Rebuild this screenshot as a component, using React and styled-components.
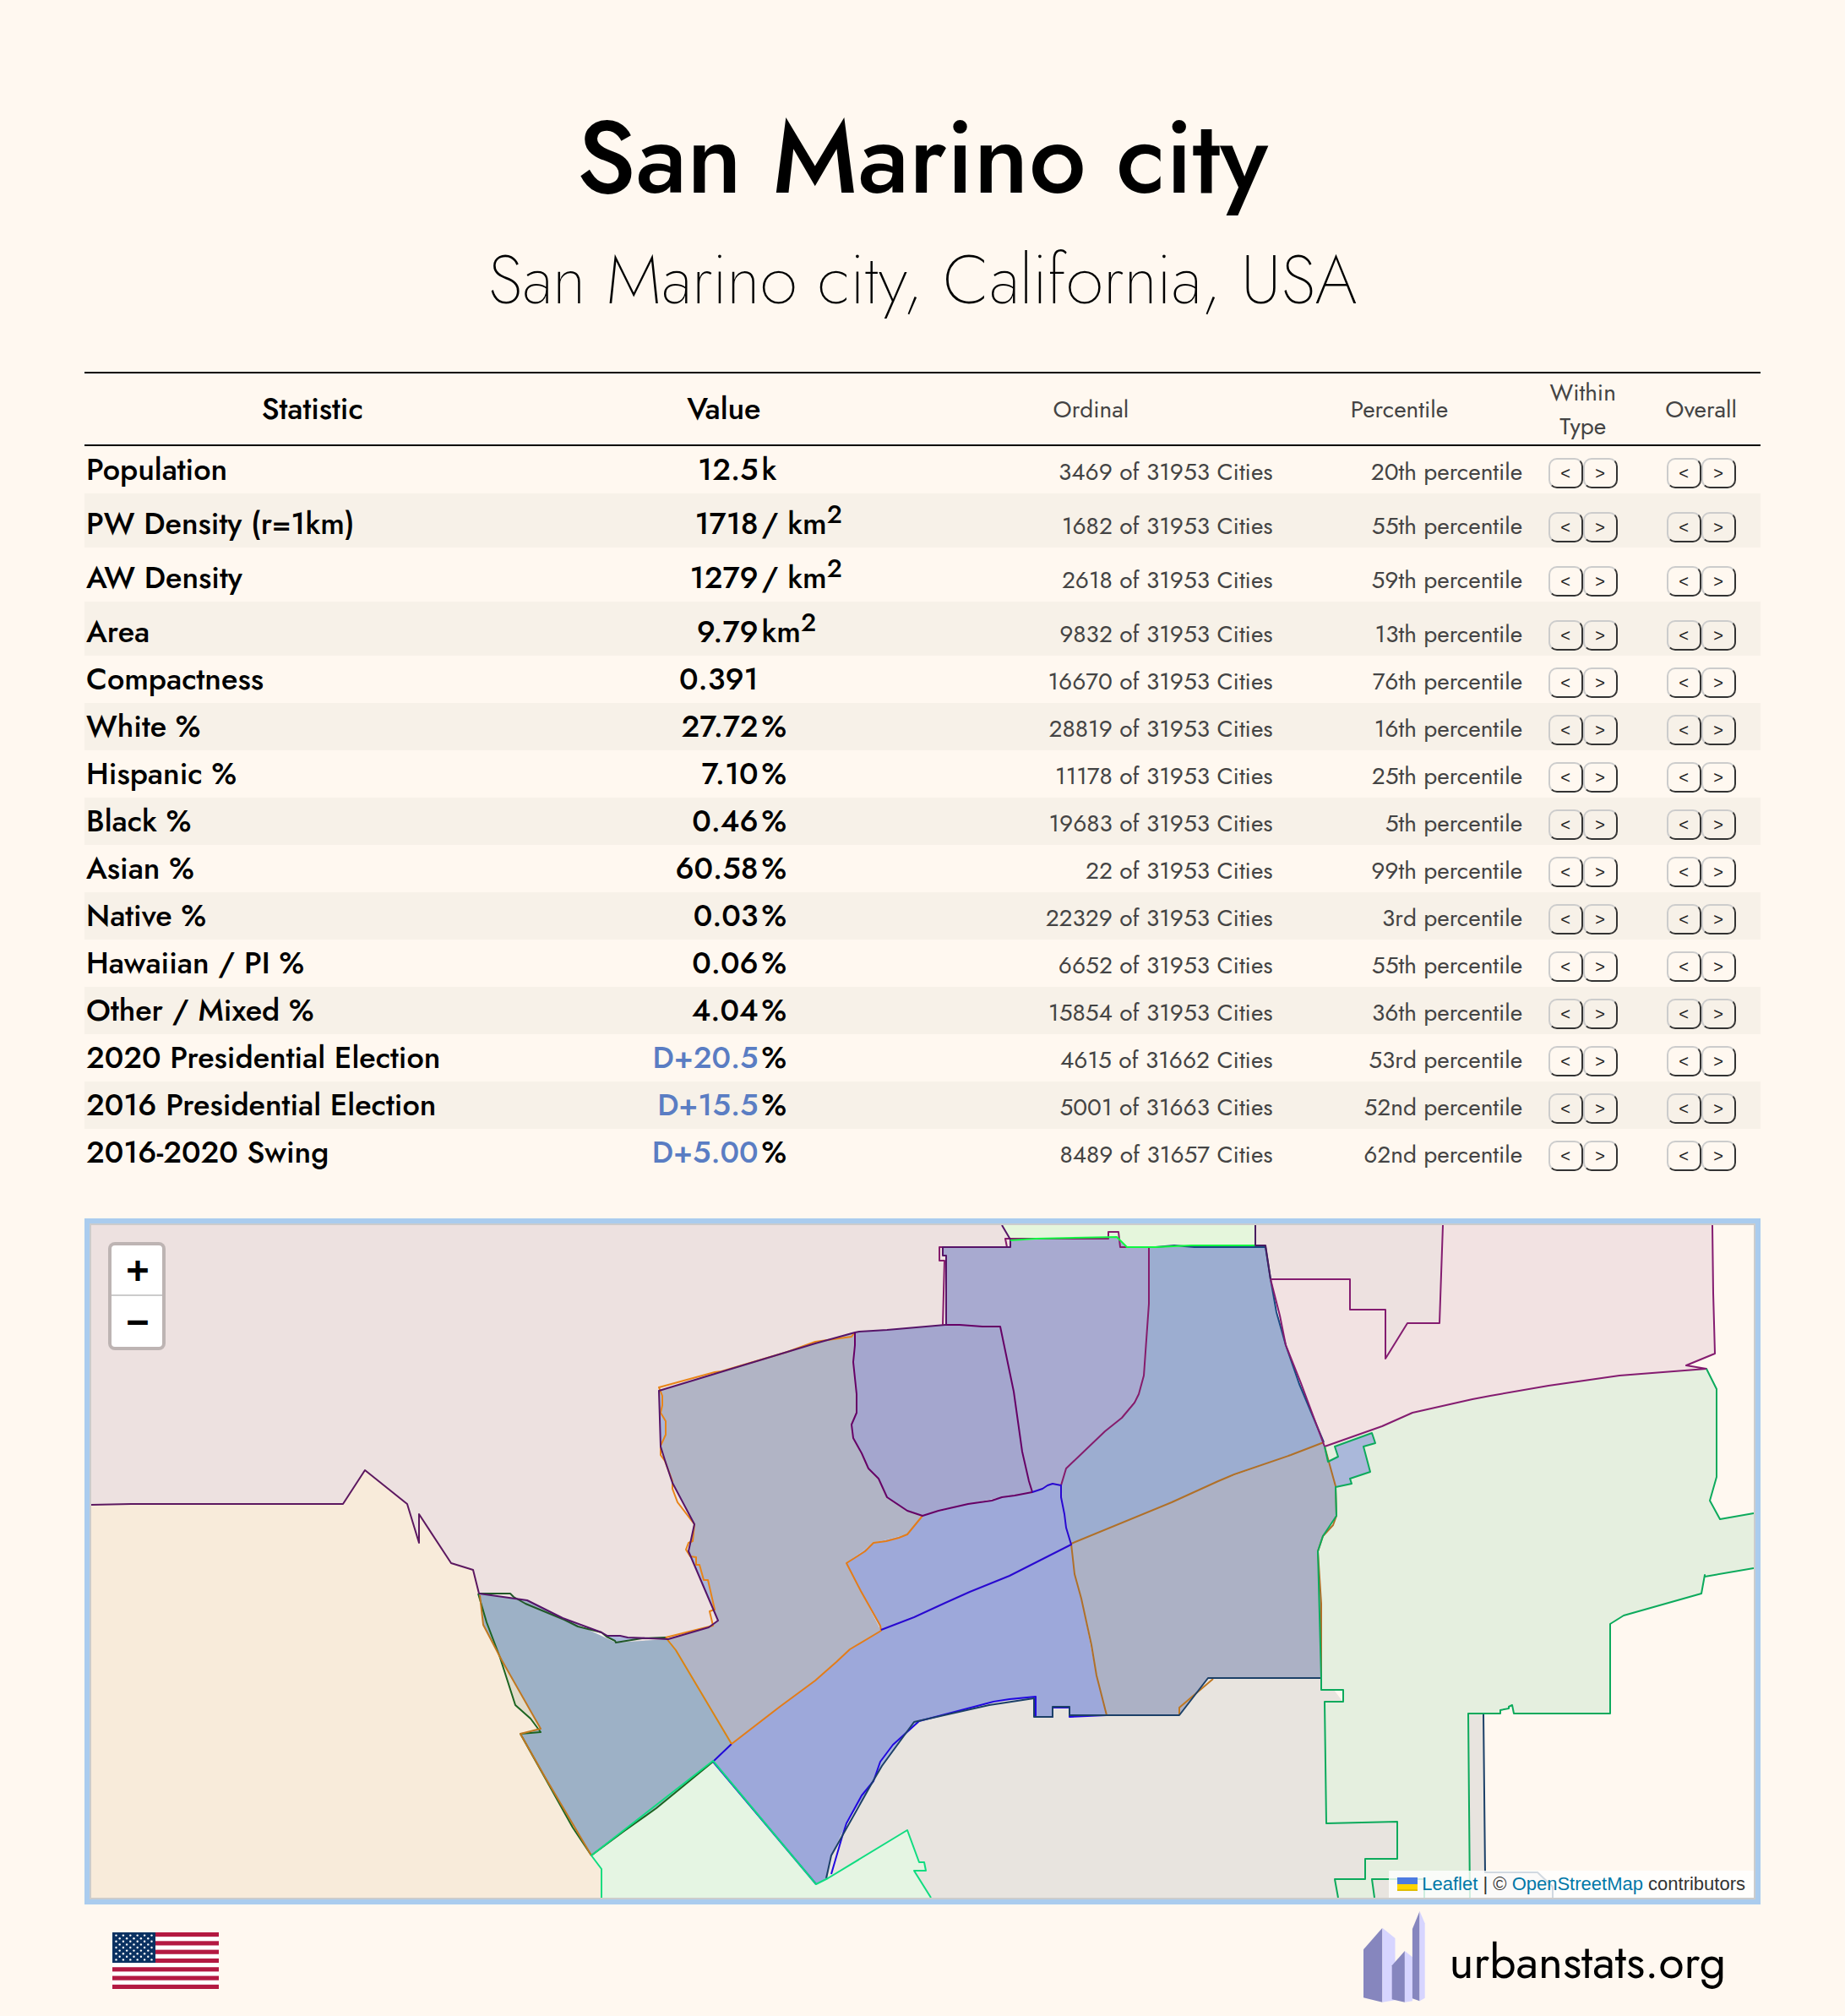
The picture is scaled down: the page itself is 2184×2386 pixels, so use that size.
import React from "react";
import styled, { createGlobalStyle } from "styled-components";

const BODY_FONT = `Jost, Lato, "Open Sans", sans-serif`;
const UI_FONT = `"Liberation Sans", Arial, sans-serif`;

const GlobalStyle = createGlobalStyle`
  *, *::before, *::after { box-sizing: border-box; }
  body { margin: 0; background: #fff8f0; color: #000; font-family: ${BODY_FONT}; }
`;

const Page = styled.main`
  padding: 118px 100px 0;
`;

const Header = styled.header`
  display: flex;
  flex-direction: column;
  align-items: center;
  text-align: center;
  margin-bottom: 34px;
`;

const Title = styled.h1`
  margin: 0;
  font-size: 120px;
  line-height: 138px;
  font-weight: 500;
`;

const Subtitle = styled.h2`
  margin: 0;
  font-size: 80px;
  line-height: 150px;
  font-weight: 200;
`;

const StatTable = styled.table`
  width: 100%;
  table-layout: fixed;
  border-collapse: separate;
  border-spacing: 0;
`;

const Col = styled.col`
  width: ${(p) => p.$share}%;
`;

const HeadCell = styled.th`
  height: 88px;
  padding: ${(p) => (p.$minor ? "3px 2px 1px" : "1px 2px 3px")};
  border-top: 2px solid #000;
  border-bottom: 2px solid #000;
  vertical-align: middle;
  font-size: ${(p) => (p.$minor ? 28 : 36)}px;
  line-height: 40px;
  font-weight: ${(p) => (p.$minor ? 400 : 500)};
  color: ${(p) => (p.$minor ? "#444" : "#000")};
`;

const Row = styled.tr`
  height: ${(p) => (p.$tall ? 64 : 56)}px;
  background: ${(p) => (p.$shaded ? "#f7f1e8" : "transparent")};
`;

const Cell = styled.td`
  padding: 0 2px 4px;
  vertical-align: bottom;
  font-size: 36px;
  line-height: 50px;
  font-weight: 500;
  white-space: nowrap;
  text-align: ${(p) => p.$align || "left"};
`;

const NameCell = styled(Cell).attrs({ as: "th", scope: "row" })``;

const MinorCell = styled(Cell)`
  padding-bottom: 2px;
  font-size: 28px;
  line-height: 46px;
  font-weight: 400;
  color: #444;
  text-align: right;
`;

const Party = styled.span`
  color: #5a7dc3;
`;

const Sup = styled.sup`
  font-size: 30px;
  line-height: 0;
`;

const NavCell = styled(Cell)`
  padding-bottom: 6px;
`;

const NavPair = styled.div`
  display: flex;
  justify-content: center;
`;

const NavButton = styled.button`
  width: 41px;
  height: 36px;
  padding: 0;
  border: 2px solid;
  border-color: #ccc #333 #333 #ccc;
  border-radius: 10px;
  background: transparent;
  color: #222;
  font-family: ${UI_FONT};
  font-size: 20px;
  line-height: 32px;
  cursor: pointer;
`;

const MapFrame = styled.section`
  position: relative;
  margin-top: 50px;
  height: 812px;
  border: 6px solid #aaccee;
  background: #fff8f0;
  overflow: hidden;
`;

const MapView = styled.div`
  height: 100%;
  border: 2px solid #ccc;
`;

const MapDrawing = styled.svg`
  display: block;
  width: 100%;
  height: 100%;
`;

const ZoomControl = styled.div`
  position: absolute;
  top: 22px;
  left: 22px;
  display: flex;
  flex-direction: column;
  border: 4px solid rgba(0, 0, 0, 0.2);
  border-radius: 8px;
  background: #fff;
  background-clip: padding-box;
`;

const ZoomButton = styled.button`
  width: 60px;
  height: 60px;
  padding: 0;
  border: 0;
  border-bottom: ${(p) => (p.$divided ? "2px solid #ccc" : "0")};
  background: transparent;
  color: #000;
  font: bold 44px/58px "DejaVu Sans Mono", monospace;
  text-indent: 2px;
  cursor: pointer;
`;

const Attribution = styled.div`
  position: absolute;
  right: 2px;
  bottom: 2px;
  display: flex;
  align-items: center;
  height: 32px;
  padding: 0 10px;
  background: rgba(255, 255, 255, 0.8);
  color: #333;
  font-family: ${UI_FONT};
  font-size: 22px;
  line-height: 32px;
  white-space: pre;
`;

const MapLink = styled.a`
  color: #0078a8;
  text-decoration: none;
`;

const SmallFlag = styled.svg`
  width: 24px;
  height: 16px;
  margin-right: 5px;
`;

const Footer = styled.footer`
  display: flex;
  align-items: flex-start;
  justify-content: space-between;
  padding: 8px 41px 16px 33px;
`;

const FlagButton = styled.a`
  display: block;
  margin-top: 25px;
`;

const Brand = styled.a`
  display: flex;
  align-items: center;
  gap: 28px;
  color: #000;
  font-size: 55px;
  line-height: 64px;
  text-decoration: none;
`;

const BrandName = styled.span`
  padding-top: 12px;
`;

const Drawing = styled.svg`
  display: block;
`;

const rows = [
  ["Population", "12.5", "k", "3469 of 31953 Cities", "20th"],
  ["PW Density (r=1km)", "1718", "/ km²", "1682 of 31953 Cities", "55th"],
  ["AW Density", "1279", "/ km²", "2618 of 31953 Cities", "59th"],
  ["Area", "9.79", "km²", "9832 of 31953 Cities", "13th"],
  ["Compactness", "0.391", "", "16670 of 31953 Cities", "76th"],
  ["White %", "27.72", "%", "28819 of 31953 Cities", "16th"],
  ["Hispanic %", "7.10", "%", "11178 of 31953 Cities", "25th"],
  ["Black %", "0.46", "%", "19683 of 31953 Cities", "5th"],
  ["Asian %", "60.58", "%", "22 of 31953 Cities", "99th"],
  ["Native %", "0.03", "%", "22329 of 31953 Cities", "3rd"],
  ["Hawaiian / PI %", "0.06", "%", "6652 of 31953 Cities", "55th"],
  ["Other / Mixed %", "4.04", "%", "15854 of 31953 Cities", "36th"],
  ["2020 Presidential Election", "D+20.5", "%", "4615 of 31662 Cities", "53rd"],
  ["2016 Presidential Election", "D+15.5", "%", "5001 of 31663 Cities", "52nd"],
  ["2016-2020 Swing", "D+5.00", "%", "8489 of 31657 Cities", "62nd"],
];

// Region fills, painted back to front.
const regions = [
  ["#f8ebda", "108,1781 155,1780 406,1780 432,1740 482,1780 496,1826 496,1792 534,1850 560,1858 567,1886 572,1923 594,1965 640,2046 616,2052 645,2103 700,2196 712,2212 712,2246 108,2246"],
  ["#ede1e0", "108,1450 1186,1450 1196,1467 1196,1476 1120,1476 1120,1568 1012,1577 780,1646 782,1712 796,1755 822,1804 815,1836 850,1918 839,1926 791,1940 740,1950 720,1936 667,1915 624,1894 567,1886 560,1858 534,1850 496,1792 496,1826 482,1780 432,1740 406,1780 155,1780 108,1781"],
  ["#e5f6dc", "1186,1450 1486,1450 1486,1474 1334,1476 1322,1464 1196,1468"],
  ["#ede1e0", "1486,1450 1708,1450 1704,1566 1640,1608 1504,1514 1498,1474 1486,1474"],
  ["#f2e2e2", "1504,1514 1598,1514 1598,1550 1640,1550 1640,1608 1666,1566 1704,1566 1708,1450 2027,1450 2028,1530 2030,1602 1996,1616 2020,1620 1917,1628 1833,1640 1764,1652 1743,1656 1672,1672 1636,1688 1568,1712 1540,1637 1522,1592 1515,1557"],
  ["#e8e4df", "966,2230 980,2180 1030,2095 1080,2030 1171,2005 1310,2000 1396,2020 1430,1980 1564,1980 1600,2028 1756,2028 1758,2216 1820,2216 1838,2233 1838,2246 966,2246"],
  ["#e5efdf", "1568,1712 1636,1688 1672,1672 1743,1656 1833,1640 1917,1628 2020,1620 2032,1644 2032,1748 2024,1776 2036,1798 2076,1791 2076,1856 2018,1866 2014,1886 1922,1912 1906,1922 1906,2028 1792,2028 1790,2018 1776,2024 1776,2028 1738,2028 1740,2246 1686,2246 1686,2224 1624,2224 1627,2246 1584,2246 1580,2224 1616,2224 1616,2200 1654,2200 1654,2156 1570,2158 1568,2014 1590,2014 1590,2000 1564,2000 1560,1836 1566,1818 1582,1794 1581,1760"],
  ["#e5f5e3", "712,2246 712,2212 700,2196 844,2084 966,2230 1074,2166 1088,2204 1094,2204 1096,2214 1082,2214 1102,2246"],
  ["#a4a6ce", "1012,1577 1050,1574 1119,1568 1184,1570 1200,1647 1210,1718 1222,1766 1186,1772 1146,1780 1092,1794 1074,1788 1050,1772 1040,1750 1028,1738 1010,1702 1008,1686 1014,1672 1014,1650 1010,1612"],
  ["#a8aad0", "1120,1568 1120,1486 1116,1486 1116,1476 1196,1476 1196,1468 1322,1464 1334,1476 1360,1476 1360,1543 1354,1628 1348,1650 1328,1678 1308,1694 1262,1738 1256,1758 1246,1756 1234,1762 1222,1766 1210,1718 1200,1647 1184,1570"],
  ["#9cadd0", "1360,1476 1498,1476 1504,1514 1511,1553 1522,1592 1538,1638 1567,1707 1528,1722 1442,1753 1387,1778 1268,1827 1262,1808 1256,1758 1262,1738 1308,1694 1328,1678 1348,1650 1354,1628 1360,1543"],
  ["#acb1c5", "1268,1827 1387,1778 1442,1753 1528,1722 1567,1707 1581,1759 1582,1794 1566,1818 1560,1836 1564,1898 1564,1986 1430,1986 1396,2030 1310,2030 1298,1983 1280,1892 1272,1863"],
  ["#b1b4c5", "780,1646 965,1590 1012,1577 1010,1612 1014,1650 1014,1672 1008,1686 1010,1702 1028,1738 1040,1750 1050,1772 1074,1788 1092,1794 1074,1816 1034,1826 1002,1850 1019,1883 1043,1930 1006,1952 965,1989 923,2020 866,2064 800,1953 791,1940 839,1926 850,1918 815,1836 822,1804 796,1755 782,1712"],
  ["#9ea9d9", "1092,1794 1146,1780 1222,1766 1246,1756 1256,1758 1268,1827 1195,1865 1119,1897 1043,1929 1019,1883 1002,1850 1034,1826 1074,1816"],
  ["#9da8da", "1268,1827 1272,1863 1280,1892 1298,1983 1310,2030 1266,2030 1266,2020 1246,2020 1246,2032 1226,2032 1226,2010 1176,2014 1088,2037 1057,2065 1042,2085 1034,2108 1002,2158 984,2196 979,2223 966,2230 844,2085 866,2064 923,2020 965,1989 1006,1952 1043,1929 1119,1897 1195,1865"],
  ["#9db1c6", "567,1886 624,1894 667,1915 729,1944 791,1940 800,1953 866,2064 844,2085 777,2140 700,2196 645,2103 616,2052 640,2046 594,1965 572,1923"],
  ["#e2dccb", "592,1962 610,2018 628,2034 640,2046"],
  ["#aab8da", "719,1936 729,1944 760,1939 743,1938"],
  ["#aab8da", "817,1842 824,1843 824,1852 828,1852 833,1870 838,1870 846,1905"],
  ["#aab8da", "782,1647 784,1663 782,1672 788,1682 788,1698 782,1711"],
  ["#aab8da", "1034,2108 1042,2085 1057,2065 1085,2038 1082,2038 1044,2090"],
  ["#aab8da", "1572,1730 1584,1724 1580,1712 1624,1696 1628,1708 1614,1712 1622,1742 1598,1750 1600,1756 1581,1760"],
];

// Boundary strokes, painted back to front.
const borders = [
  ["#205828", "567,1886 604,1886 608,1890 622,1898 668,1917 684,1925 712,1932 718,1937 728,1942 729,1944 760,1939 788,1938"],
  ["#1c6420", "566,1886 576,1920 592,1962 610,2018 628,2034 640,2050 616,2052 678,2163 700,2196 739,2167 777,2140 844,2085"],
  ["#c07820", "568,1888 572,1923 594,1965 640,2046 616,2052 645,2103 700,2196"],
  ["#2008d8", "866,2064 844,2085 966,2230"],
  ["#e88418", "788,1938 844,1924 840,1907 846,1905 838,1870 833,1870 828,1852 824,1852 824,1843 817,1842 812,1834 815,1826 820,1824 822,1804 802,1778 796,1762 796,1753 787,1729 782,1722 782,1711 788,1698 788,1682 782,1672 784,1663 784,1652 780,1642 846,1624 854,1623 932,1600 965,1588 1008,1582 1011,1578"],
  ["#dc8410", "788,1938 800,1953 866,2064"],
  ["#e47c18", "866,2064 923,2020 965,1989 990,1967 1006,1952 1043,1930 1042,1924 1019,1883 1002,1850 1024,1836 1034,1826 1049,1824 1064,1820 1074,1816 1092,1794"],
  ["#5c1860", "108,1781 155,1780 406,1780 432,1740 482,1780 496,1826 496,1792 534,1850 560,1858 567,1886"],
  ["#561468", "567,1886 624,1894 666,1915 712,1932 719,1936 734,1936 743,1938 791,1940 839,1926 850,1918 815,1836 822,1804 796,1755 787,1728 782,1712 780,1646 965,1590 1012,1577 1017,1576 1050,1574 1119,1568"],
  ["#660066", "1119,1568 1136,1568 1163,1570 1184,1570 1200,1647 1210,1718 1218,1753 1222,1766 1201,1770 1186,1772 1174,1776 1146,1780 1111,1788 1092,1794 1074,1788 1050,1772 1040,1750 1028,1738 1020,1720 1010,1702 1008,1686 1014,1672 1014,1650 1010,1612 1012,1592 1012,1577"],
  ["#851c6c", "1116,1568 1118,1492 1112,1492 1112,1476 1192,1476 1190,1466 1312,1466 1312,1458 1324,1458 1326,1476 1360,1476 1360,1543 1354,1628 1348,1650 1343,1660 1328,1678 1308,1694 1262,1738 1256,1758"],
  ["#561468", "1120,1568 1120,1486 1116,1486 1116,1476 1196,1476 1196,1467 1186,1450"],
  ["#184880", "1368,1476 1390,1474 1414,1476 1498,1476 1504,1514 1511,1553 1522,1592 1538,1638 1567,1707"],
  ["#10f840", "1196,1468 1226,1466 1322,1464 1334,1476 1368,1476 1410,1474 1486,1474"],
  ["#481c60", "1486,1450 1486,1474 1498,1474 1504,1514"],
  ["#b07028", "1567,1707 1528,1722 1461,1745 1442,1753 1387,1778 1268,1827 1272,1863 1280,1892 1292,1947 1298,1983 1310,2030"],
  ["#b07028", "1568,1712 1581,1759 1582,1794 1578,1805 1566,1818 1560,1836 1564,1898 1564,1986"],
  ["#c07820", "1396,2030 1396,2021 1436,1987"],
  ["#841c70", "1504,1514 1598,1514 1598,1550 1640,1550 1640,1608 1666,1566 1704,1566 1708,1450"],
  ["#841c70", "2027,1450 2028,1530 2030,1602 1996,1616 2020,1620 1917,1628 1833,1640 1764,1652 1743,1656 1672,1672 1636,1688 1568,1712 1540,1637 1522,1592 1515,1557 1504,1514"],
  ["#2808d0", "1222,1766 1234,1762 1240,1758 1246,1756 1256,1758 1256,1772 1260,1792 1262,1808 1268,1828 1195,1865 1148,1884 1119,1897 1082,1914 1043,1929"],
  ["#2008e0", "984,2218 998,2170 1002,2158 1020,2125 1034,2108 1042,2085 1057,2065 1088,2037 1176,2014 1195,2011 1226,2008 1226,2032 1246,2032 1246,2021 1266,2021 1266,2032 1310,2030"],
  ["#1c4068", "978,2223 984,2196 998,2171 1034,2107 1044,2090 1082,2038 1171,2018 1224,2010 1224,2032 1246,2032 1246,2020 1266,2020 1266,2030 1396,2030 1430,1986 1564,1986"],
  ["#1c4068", "1756,2028 1758,2216 1820,2216 1838,2233 1838,2246"],
  ["#10dc80", "712,2246 712,2212 700,2196 844,2084 966,2230 980,2223 1074,2166 1088,2204 1094,2204 1096,2214 1082,2214 1102,2246"],
  ["#0caa5c", "1568,1712 1572,1730 1584,1724 1580,1712 1624,1696 1628,1708 1614,1712 1622,1742 1598,1750 1600,1756 1581,1760 1582,1794 1566,1818 1560,1836 1564,1986 1564,2000 1590,2000 1590,2014 1568,2014 1570,2158 1654,2156 1654,2200 1616,2200 1616,2224 1580,2224 1584,2246"],
  ["#0caa5c", "1627,2246 1624,2224 1686,2224 1686,2246"],
  ["#0caa5c", "1740,2246 1738,2028 1776,2028 1776,2024 1786,2022 1786,2020 1790,2018 1792,2028 1906,2028 1906,1922 1922,1912 2014,1886 2018,1864 2018,1866 2076,1856"],
  ["#0caa5c", "2020,1620 2032,1644 2032,1748 2024,1776 2036,1798 2076,1791"],
];

const stripes = [0, 2, 4, 6, 8, 10, 12];
const starRows = Array.from({ length: 9 }, (_, r) =>
  Array.from({ length: r % 2 ? 5 : 6 }, (_, c) => [4 + c * 8.4 + (r % 2 ? 4.2 : 0), 3.6 + r * 3.6])
).flat();

function Unit({ text }) {
  if (!text.endsWith("²")) return text;
  return (
    <>
      {text.slice(0, -1)}
      <Sup>2</Sup>
    </>
  );
}

function NavButtons({ label, scope }) {
  return (
    <NavCell>
      <NavPair>
        <NavButton type="button" aria-label={`Previous by ${label}, ${scope}`}>&lt;</NavButton>
        <NavButton type="button" aria-label={`Next by ${label}, ${scope}`}>&gt;</NavButton>
      </NavPair>
    </NavCell>
  );
}

function StatRow({ row, shaded }) {
  const [name, value, unit, ordinal, percentile] = row;
  return (
    <Row $shaded={shaded} $tall={unit.includes("²")}>
      <NameCell>{name}</NameCell>
      <Cell $align="right">{value.startsWith("D+") ? <Party>{value}</Party> : value}</Cell>
      <Cell>
        <Unit text={unit} />
      </Cell>
      <MinorCell>{ordinal}</MinorCell>
      <MinorCell>{percentile} percentile</MinorCell>
      <NavButtons label={name} scope="within type" />
      <NavButtons label={name} scope="overall" />
    </Row>
  );
}

function RegionMap() {
  return (
    <MapFrame aria-label="Map">
      <MapView>
        <MapDrawing viewBox="108 1450 1968 796" preserveAspectRatio="xMidYMid slice" aria-hidden="true">
          {regions.map(([fill, points], i) => (
            <polygon key={i} fill={fill} points={points} />
          ))}
          {borders.map(([stroke, points], i) => (
            <polyline key={i} fill="none" stroke={stroke} strokeWidth="2" strokeLinejoin="round" points={points} />
          ))}
        </MapDrawing>
      </MapView>
      <ZoomControl>
        <ZoomButton type="button" aria-label="Zoom in" $divided>+</ZoomButton>
        <ZoomButton type="button" aria-label="Zoom out">−</ZoomButton>
      </ZoomControl>
      <Attribution>
        <SmallFlag viewBox="0 0 12 8" aria-hidden="true">
          <path fill="#4C7BE1" d="M0 0h12v4H0z" />
          <path fill="#FFD500" d="M0 4h12v3H0z" />
          <path fill="#E0BC00" d="M0 7h12v1H0z" />
        </SmallFlag>
        <MapLink href="#leaflet">Leaflet</MapLink>
        {" | © "}
        <MapLink href="#openstreetmap">OpenStreetMap</MapLink>
        {" contributors"}
      </Attribution>
    </MapFrame>
  );
}

function UsFlag() {
  return (
    <Drawing width="126" height="67" viewBox="0 0 126 67" aria-hidden="true">
      <rect width="126" height="67" fill="#fff" />
      {stripes.map((s) => (
        <rect key={s} y={(s * 67) / 13} width="126" height={67 / 13} fill="#b31942" />
      ))}
      <rect width="51" height="36" fill="#0a3161" />
      {starRows.map(([x, y], i) => (
        <circle key={i} cx={x + 0.5} cy={y} r="1.2" fill="#fff" />
      ))}
    </Drawing>
  );
}

function Skyline() {
  return (
    <Drawing width="73" height="108" viewBox="0 0 73 108" aria-hidden="true">
      <path fill="#8686be" d="M0 45.3 22.4 19.7V107.7L0 102.3z" />
      <path fill="#d7d5ff" d="M22.4 19.7 37.5 32V105.3L22.4 107.7z" />
      <path fill="#8686be" d="M33.7 64.3 48.9 47V107.7L33.7 104.3z" />
      <path fill="#d7d5ff" d="M48.9 47 57.9 54.3V106.3L48.9 107.7z" />
      <path fill="#8686be" d="M57.9 21 66.5 0V106.3L57.9 103.3z" />
      <path fill="#d7d5ff" d="M66.5 0 72.7 14.3V102.7L66.5 106.3z" />
    </Drawing>
  );
}

export default function App() {
  return (
    <>
      <GlobalStyle />
      <Page>
        <Header>
          <Title>San Marino city</Title>
          <Subtitle>San Marino city, California, USA</Subtitle>
        </Header>
        <StatTable>
          <colgroup>
            {[27.2, 13.1, 8.8, 21.9, 14.9, 7, 7.1].map((share, i) => (
              <Col key={i} $share={share} />
            ))}
          </colgroup>
          <thead>
            <tr>
              <HeadCell scope="col">Statistic</HeadCell>
              <HeadCell scope="colgroup" colSpan={2}>Value</HeadCell>
              <HeadCell scope="col" $minor>Ordinal</HeadCell>
              <HeadCell scope="col" $minor>Percentile</HeadCell>
              <HeadCell scope="col" $minor>Within Type</HeadCell>
              <HeadCell scope="col" $minor>Overall</HeadCell>
            </tr>
          </thead>
          <tbody>
            {rows.map((row, i) => (
              <StatRow key={row[0]} row={row} shaded={i % 2 === 1} />
            ))}
          </tbody>
        </StatTable>
        <RegionMap />
        <Footer>
          <FlagButton href="#usa" aria-label="USA">
            <UsFlag />
          </FlagButton>
          <Brand href="#home">
            <Skyline />
            <BrandName>urbanstats.org</BrandName>
          </Brand>
        </Footer>
      </Page>
    </>
  );
}
